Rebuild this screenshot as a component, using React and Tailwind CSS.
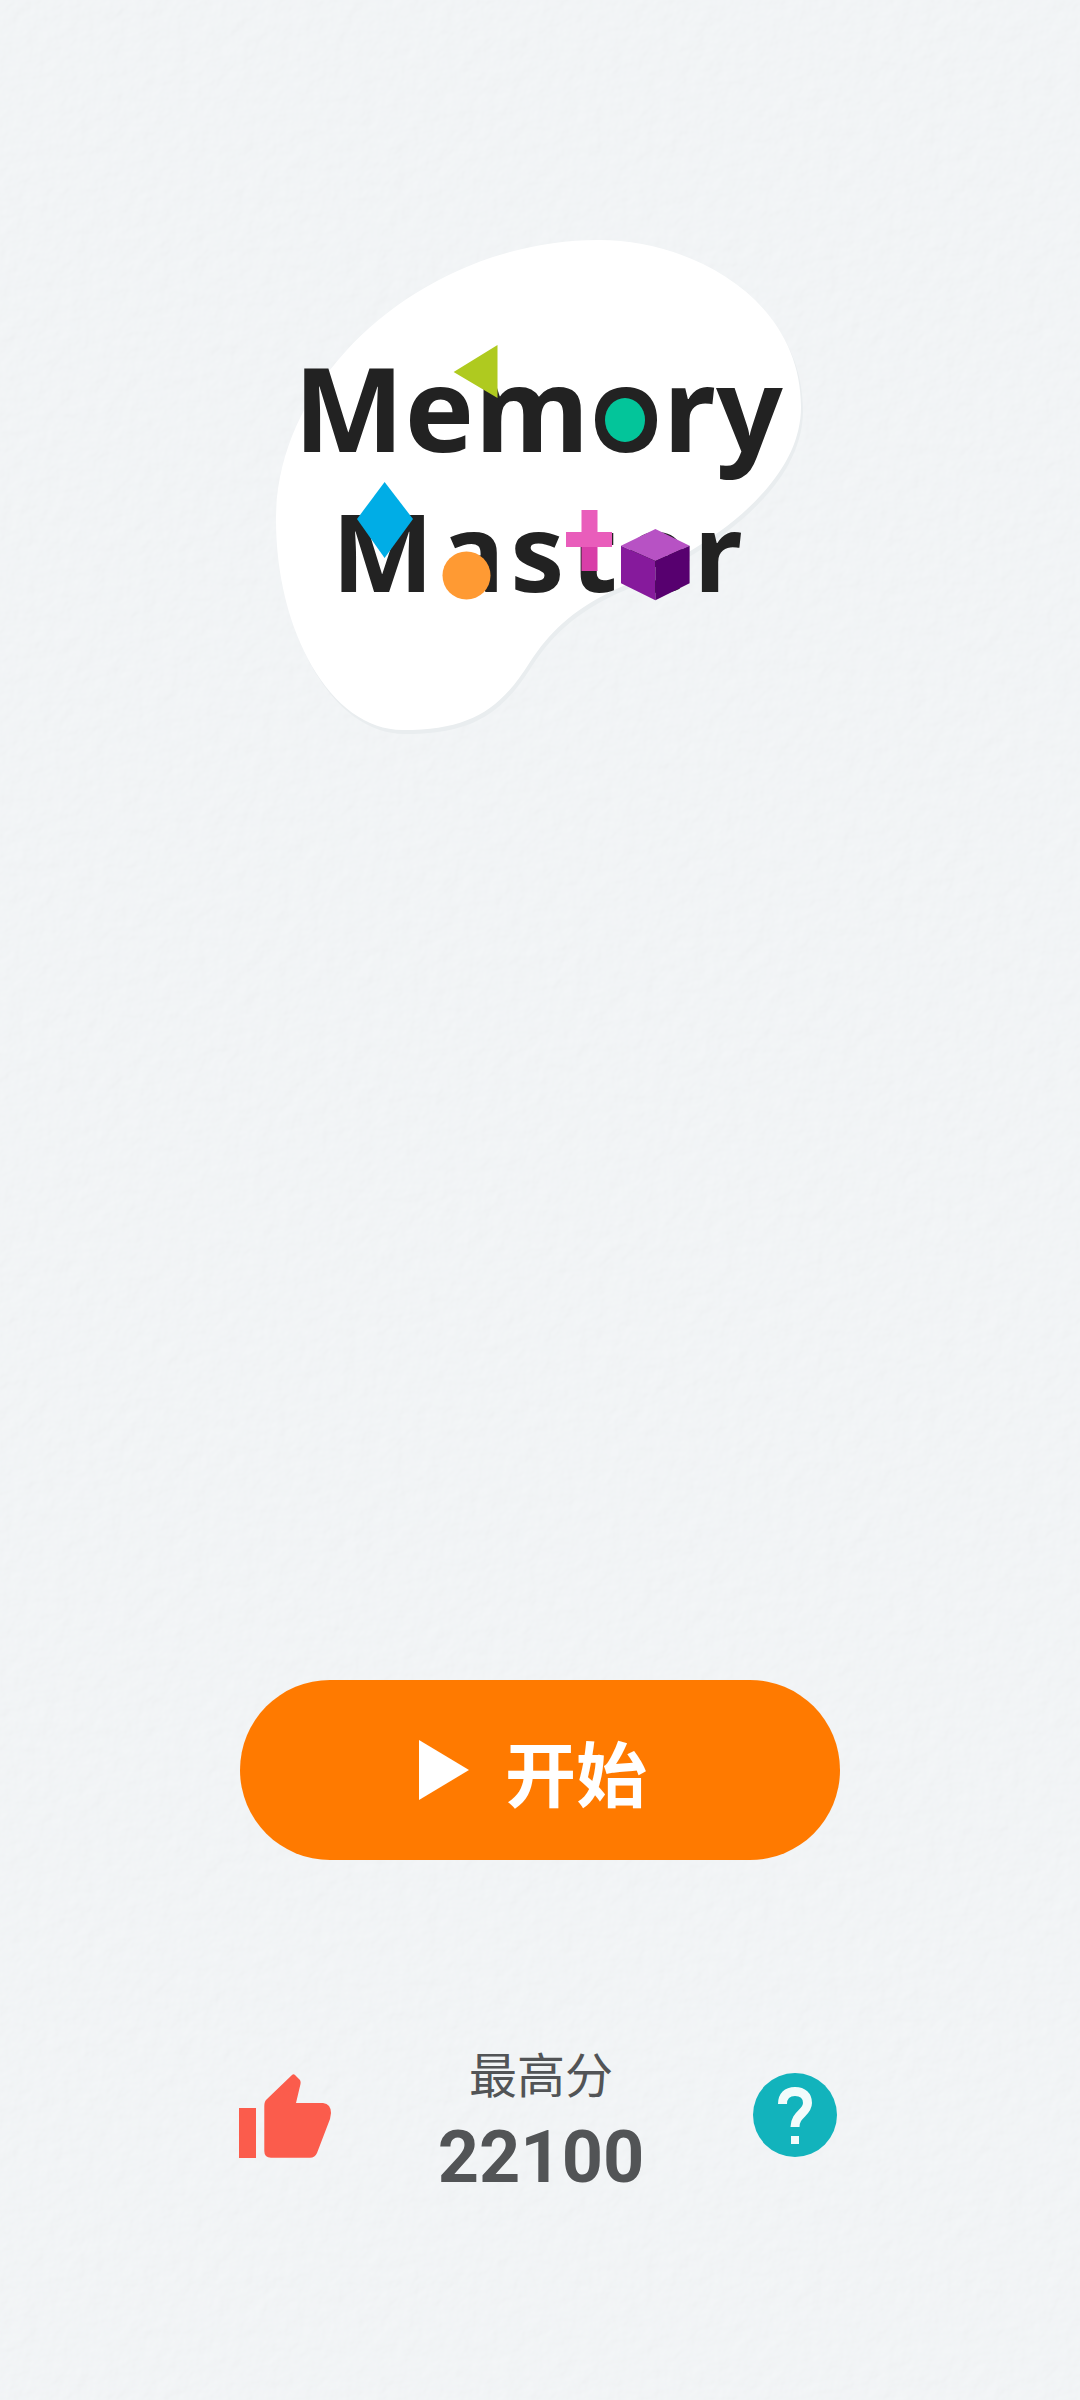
import React from 'react'

const blob = 'M599 240 C693 240 801 300 801 407 C801 480 720 545 612 591 C570 612 550 632 530 662 C500 710 470 730 403 730 C330 730 276 630 276 520 C276 370 430 240 599 240 Z'

function Paper() {
    return (
        <svg className="absolute inset-0 w-full h-full pointer-events-none" width="1080" height="2400">
            <filter id="paper" x="0" y="0" width="100%" height="100%">
                <feTurbulence type="fractalNoise" baseFrequency="0.06" numOctaves="3" seed="4" />
                <feDiffuseLighting lightingColor="#ffffff" surfaceScale="1.1" diffuseConstant="1.05">
                    <feDistantLight azimuth="45" elevation="62" />
                </feDiffuseLighting>
            </filter>
            <rect width="1080" height="2400" filter="url(#paper)" opacity="0.18" />
        </svg>
    )
}

function Logo() {
    return (
        <div className="relative w-full h-[490px] mt-[240px]">
            <svg className="absolute inset-0" width="1080" height="490" viewBox="0 240 1080 490" style={{ overflow: 'visible' }}>
                <path d={blob} fill="#e9edef" transform="translate(2 4)" />
                <path d={blob} fill="#ffffff" />
            </svg>
            <div className="relative flex flex-col items-center font-['Noto_Sans',sans-serif] font-bold text-[#222222]">
                <div className="text-[117px] leading-[144px] mt-[95px] tracking-[0.5px] pr-[3px]">Memory</div>
                <div className="text-[108px] leading-[144px] tracking-[6px]">Master</div>
            </div>
            <svg className="absolute inset-0" width="1080" height="490" viewBox="0 240 1080 490" style={{ overflow: 'visible' }}>
                <polygon points="497.5,345 453.6,372 497.5,398" fill="#afca1f" />
                <ellipse cx="625" cy="420" rx="20" ry="22" fill="#03c59a" />
                <polygon points="384.6,482 413,519 384.6,558 357,519" fill="#00ade6" />
                <circle cx="466.5" cy="575.5" r="24" fill="#ff9a33" />
                <rect x="581.5" y="532" width="16" height="39" fill="#d83ea8" />
                <rect x="581.5" y="510" width="16" height="37" fill="#e95dbb" />
                <rect x="566" y="532" width="46" height="15" fill="#e95dbb" />
                <polygon points="655.4,529 689.6,545.7 655.4,561 621,545.7" fill="#b752c4" />
                <polygon points="621,545.7 655.4,561 655.4,600.3 621,583.3" fill="#861a9c" />
                <polygon points="689.6,545.7 655.4,561 655.4,600.3 689.6,583.3" fill="#57006f" />
            </svg>
        </div>
    )
}

function ThumbIcon() {
    return (
        <svg width="92" height="86" viewBox="239 2072 92 86">
            <rect x="239" y="2107" width="17" height="50" fill="#fb5c4c" />
            <path d="M292 2074 Q293.5 2072.5 295 2074 L300 2079 Q301 2081 300.5 2083 L296 2102 L323 2102 Q331 2103 331 2112 L330 2118 L317 2152 Q315 2156.7 310 2156.7 L271 2156.7 Q264.3 2156.7 264.3 2150 L264.3 2105 Q264.3 2100 267 2098 Z" fill="#fb5c4c" />
        </svg>
    )
}

function HelpIcon() {
    return (
        <svg width="84" height="84" viewBox="0 0 84 84">
            <circle cx="42" cy="42" r="42" fill="#12b3bc" />
            <path d="M29.5 31 C29.5 23 34 18.5 42 18.5 C50 18.5 54.5 23 54.5 30 C54.5 40 42 41 42 54" fill="none" stroke="#f2fbfb" strokeWidth="9" />
            <rect x="38" y="63" width="8" height="8" fill="#f2fbfb" />
        </svg>
    )
}

export default function App() {
    return (
        <div className="relative w-[1080px] h-[2400px] bg-[#f1f4f6] overflow-hidden flex flex-col items-center">
            <Paper />
            <Logo />
            <button className="relative mt-[950px] w-[600px] h-[180px] rounded-full bg-[#ff7a00] flex items-center justify-center gap-[36px] pr-[14px] text-white">
                <svg width="50" height="60" viewBox="0 0 50 60">
                    <polygon points="0,0 50,30 0,60" fill="#ffffff" />
                </svg>
                <span className="text-[71px] leading-none font-bold font-['Noto_Sans_CJK_SC',sans-serif]">开始</span>
            </button>
            <div className="relative mt-[180px] w-[600px] flex justify-between items-start">
                <div className="mt-[33px] ml-[-1px]"><ThumbIcon /></div>
                <div className="flex flex-col items-center text-[#525456] pr-[2px]">
                    <div className="text-[48px] leading-[64px] font-['Noto_Sans_CJK_SC',sans-serif]">最高分</div>
                    <div className="text-[72px] leading-[80px] mt-[14px] font-bold font-['Roboto',sans-serif]">22100</div>
                </div>
                <div className="mt-[33px] mr-[3px]"><HelpIcon /></div>
            </div>
        </div>
    )
}
